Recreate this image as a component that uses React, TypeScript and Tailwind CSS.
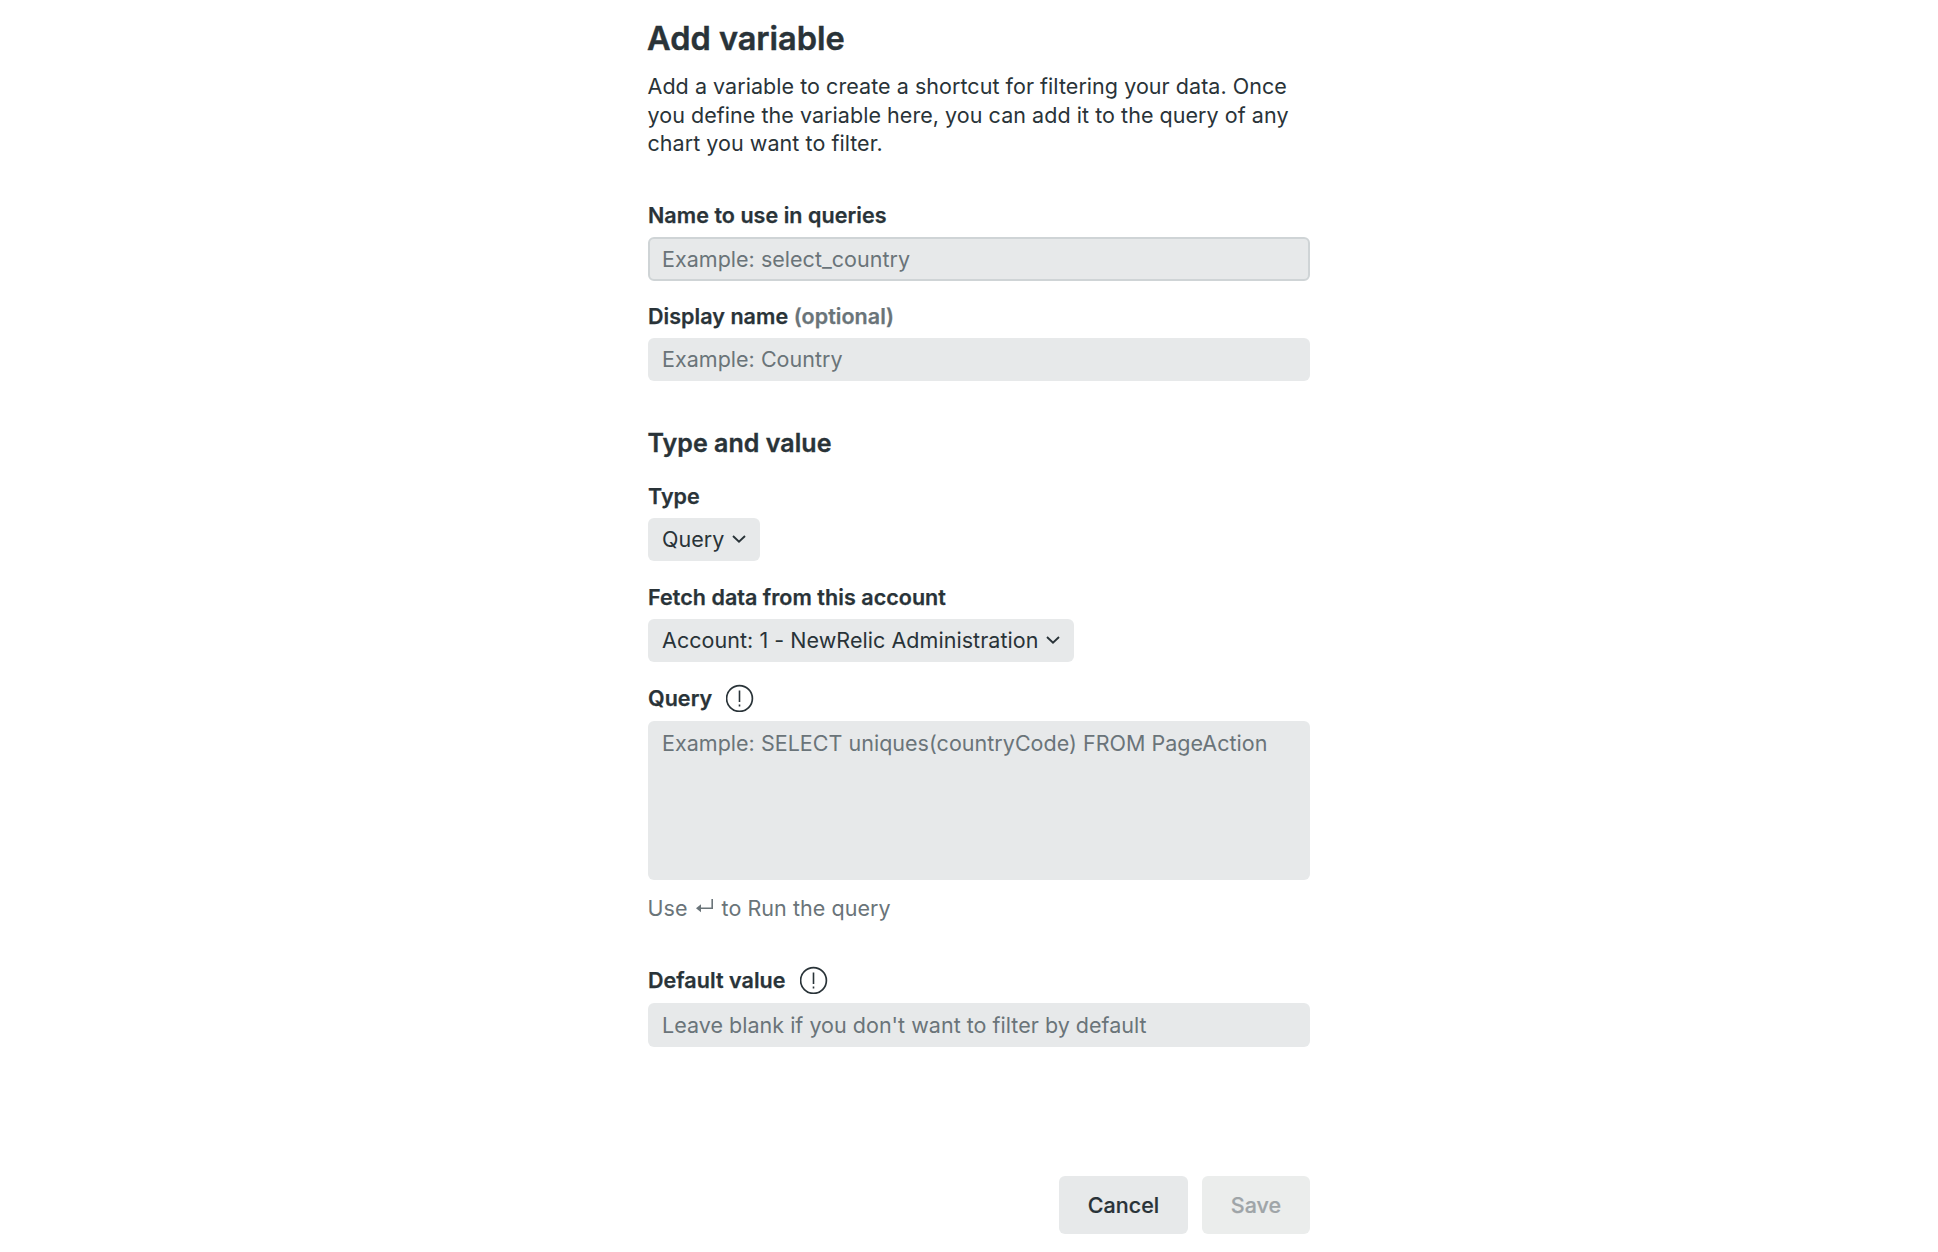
import React from "react";

function Chevron() {
  return (
    <svg className="ml-[7.5px] h-2.5 w-3.5 shrink-0" viewBox="0 0 14 10" fill="none" stroke="#293338" strokeWidth="1.9">
      <path d="M1 2l6 5.6L13 2" />
    </svg>
  );
}

function Info() {
  return (
    <svg className="ml-3.5 size-7 shrink-0" viewBox="0 0 28 28" fill="none" stroke="#293338">
      <circle cx="13.5" cy="14.5" r="12.9" strokeWidth="1.7" />
      <path d="M13.5 6.5v11.5M13.5 20.6v1.8" strokeWidth="1.6" />
    </svg>
  );
}

function Label({ children }: { children: React.ReactNode }) {
  return (
    <label className="flex h-7 items-center font-semibold whitespace-pre [-webkit-text-stroke:0.25px]">
      {children}
    </label>
  );
}

const field =
  "block w-full rounded-md bg-[#e7e9ea] tracking-[0.02px] text-[#6a7479] placeholder:text-[#6a7479] placeholder:opacity-100 outline-none resize-none";
const select = "flex h-[43px] w-fit items-center whitespace-pre rounded-md bg-[#e7e9ea] px-3.5";

export default function App() {
  return (
    <main className="min-h-[1252px] bg-white pt-[19px] font-['Inter',sans-serif] text-[21.5px] leading-7 tracking-[0.045px] text-[#293338]">
      <form className="ml-[648px] w-[662px]">
        <h1 className="-ml-px text-[32.5px] leading-10 font-semibold tracking-normal [-webkit-text-stroke:0.45px]">
          Add variable
        </h1>
        <p className="mt-[13px] -ml-[0.5px] leading-[28.6px] whitespace-nowrap">
          Add a variable to create a shortcut for filtering your data. Once
          <br />
          you define the variable here, you can add it to the query of any
          <br />
          chart you want to filter.
        </p>

        <div className="mt-[43px]">
          <Label>Name to use in queries</Label>
          <input className={`${field} mt-2 h-11 border-2 border-[#cfd4d6] px-3`} placeholder="Example: select_country" />
        </div>
        <div className="mt-[21px]">
          <Label>
            Display name <span className="text-[#6a7479]">(optional)</span>
          </Label>
          <input className={`${field} mt-2 h-[43px] px-3.5`} placeholder="Example: Country" />
        </div>

        <h2 className="mt-[46px] -ml-[0.5px] text-[25px] leading-8 font-semibold [-webkit-text-stroke:0.35px]">
          Type and value
        </h2>
        <div className="mt-[23px]">
          <Label>Type</Label>
          <button type="button" className={`${select} mt-2`}>
            Query
            <Chevron />
          </button>
        </div>
        <div className="mt-[22px]">
          <Label>Fetch data from this account</Label>
          <button type="button" className={`${select} mt-2`}>
            Account: 1 - NewRelic Administration
            <Chevron />
          </button>
        </div>
        <div className="mt-[22px]">
          <Label>
            Query
            <Info />
          </Label>
          <textarea
            className={`${field} mt-[9px] h-[159px] px-3.5 py-2`}
            placeholder="Example: SELECT uniques(countryCode) FROM PageAction"
          />
          <p className="mt-3.5 -ml-[0.5px] flex h-7 items-center whitespace-pre text-[#6a7479]">
            Use
            <svg className="mx-[7.5px] h-5 w-[19px]" viewBox="0 0 19 20" fill="none" stroke="#6a7479" strokeWidth="1.6">
              <path d="M17.2 1v9.2H3" />
              <path d="M6 6.2L1 10.2L6 14.2z" fill="#6a7479" stroke="none" />
            </svg>
            to Run the query
          </p>
        </div>
        <div className="mt-11">
          <Label>
            Default value
            <Info />
          </Label>
          <input
            className={`${field} mt-[9px] h-11 px-3.5`}
            placeholder="Leave blank if you don't want to filter by default"
          />
        </div>

        <div className="mt-[129px] flex justify-end gap-3.5 font-medium">
          <button type="button" className="h-[58px] w-[129px] rounded-md bg-[#e7e9ea] [-webkit-text-stroke:0.2px]">
            Cancel
          </button>
          <button
            type="button"
            className="h-[58px] w-[108px] rounded-md bg-[#ebedec] text-[#9fa5a8] [-webkit-text-stroke:0.2px]"
          >
            Save
          </button>
        </div>
      </form>
    </main>
  );
}
